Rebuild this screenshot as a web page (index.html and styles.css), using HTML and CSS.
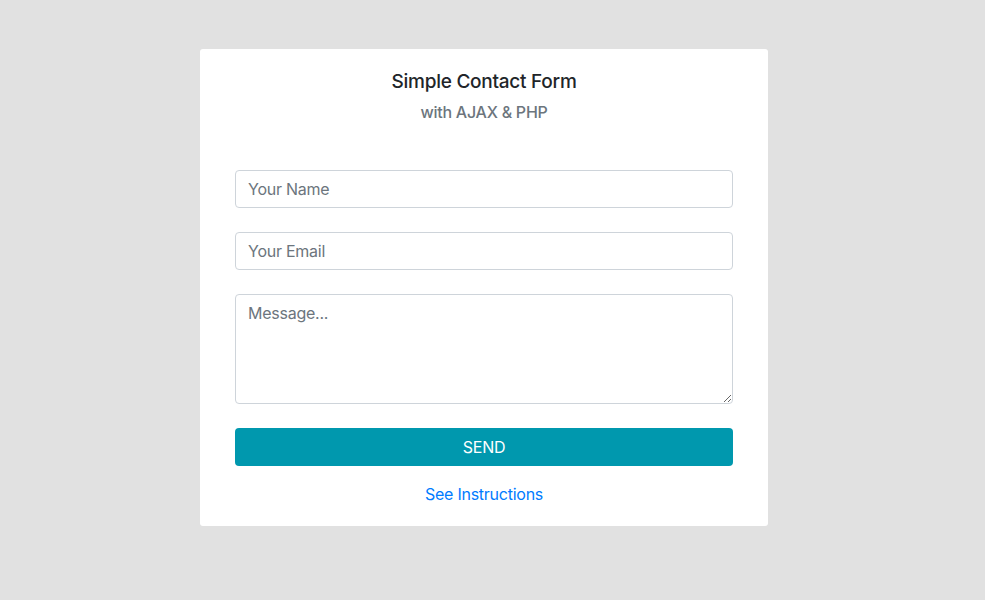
FILE: index.html
```html
<!DOCTYPE html>
<html>

<head>
    <title>Simple Contact Form</title>
    <link rel="stylesheet" href="styles.css">
</head>

<body>
    <div class="page">
        <div class="card">
            <h1>Simple Contact Form</h1>
            <p class="sub">with AJAX &amp; PHP</p>

            <form class="form" onsubmit="return false">
                <input type="text" placeholder="Your Name">
                <input type="email" placeholder="Your Email">
                <textarea placeholder="Message..."></textarea>
                <button type="submit">SEND</button>
            </form>

            <a href="#">See Instructions</a>
        </div>
    </div>
</body>

</html>
```

FILE: styles.css
```css
body {
    margin: 0;
    background-color: #e1e1e1;
    font-family: Inter, "Liberation Sans", sans-serif;
    color: #212529;
    letter-spacing: -0.25px;
}

.page {
    width: 968px;
    padding-top: 49px;
}

.card {
    width: 568px;
    box-sizing: border-box;
    margin: 0 auto;
    padding: 21px 35px 20px;
    background: #fff;
    border-radius: 3px;
    text-align: center;
}

h1 {
    margin: 0;
    font-size: 19px;
    font-weight: 500;
    line-height: 23px;
}

.sub {
    margin: 7px 0 0;
    font-size: 16px;
    line-height: 24px;
    font-weight: 500;
    color: #6c757d;
}

.form {
    margin-top: 46px;
    display: flex;
    flex-direction: column;
    gap: 24px;
}

input,
textarea {
    box-sizing: border-box;
    width: 100%;
    height: 38px;
    padding: 6px 12px;
    font-family: inherit;
    font-size: 16px;
    line-height: 24px;
    letter-spacing: -0.25px;
    color: #495057;
    border: 1px solid #ced4da;
    border-radius: 4px;
    outline: none;
}

textarea {
    height: 110px;
    resize: vertical;
}

::placeholder {
    color: #6c757d;
}

button {
    height: 38px;
    font-family: inherit;
    font-size: 16px;
    letter-spacing: -0.25px;
    color: #fff;
    background-color: #0098ae;
    border: none;
    border-radius: 4px;
    cursor: pointer;
}

a {
    display: block;
    margin-top: 16px;
    font-size: 16px;
    line-height: 24px;
    color: #007bff;
    text-decoration: none;
}
```
